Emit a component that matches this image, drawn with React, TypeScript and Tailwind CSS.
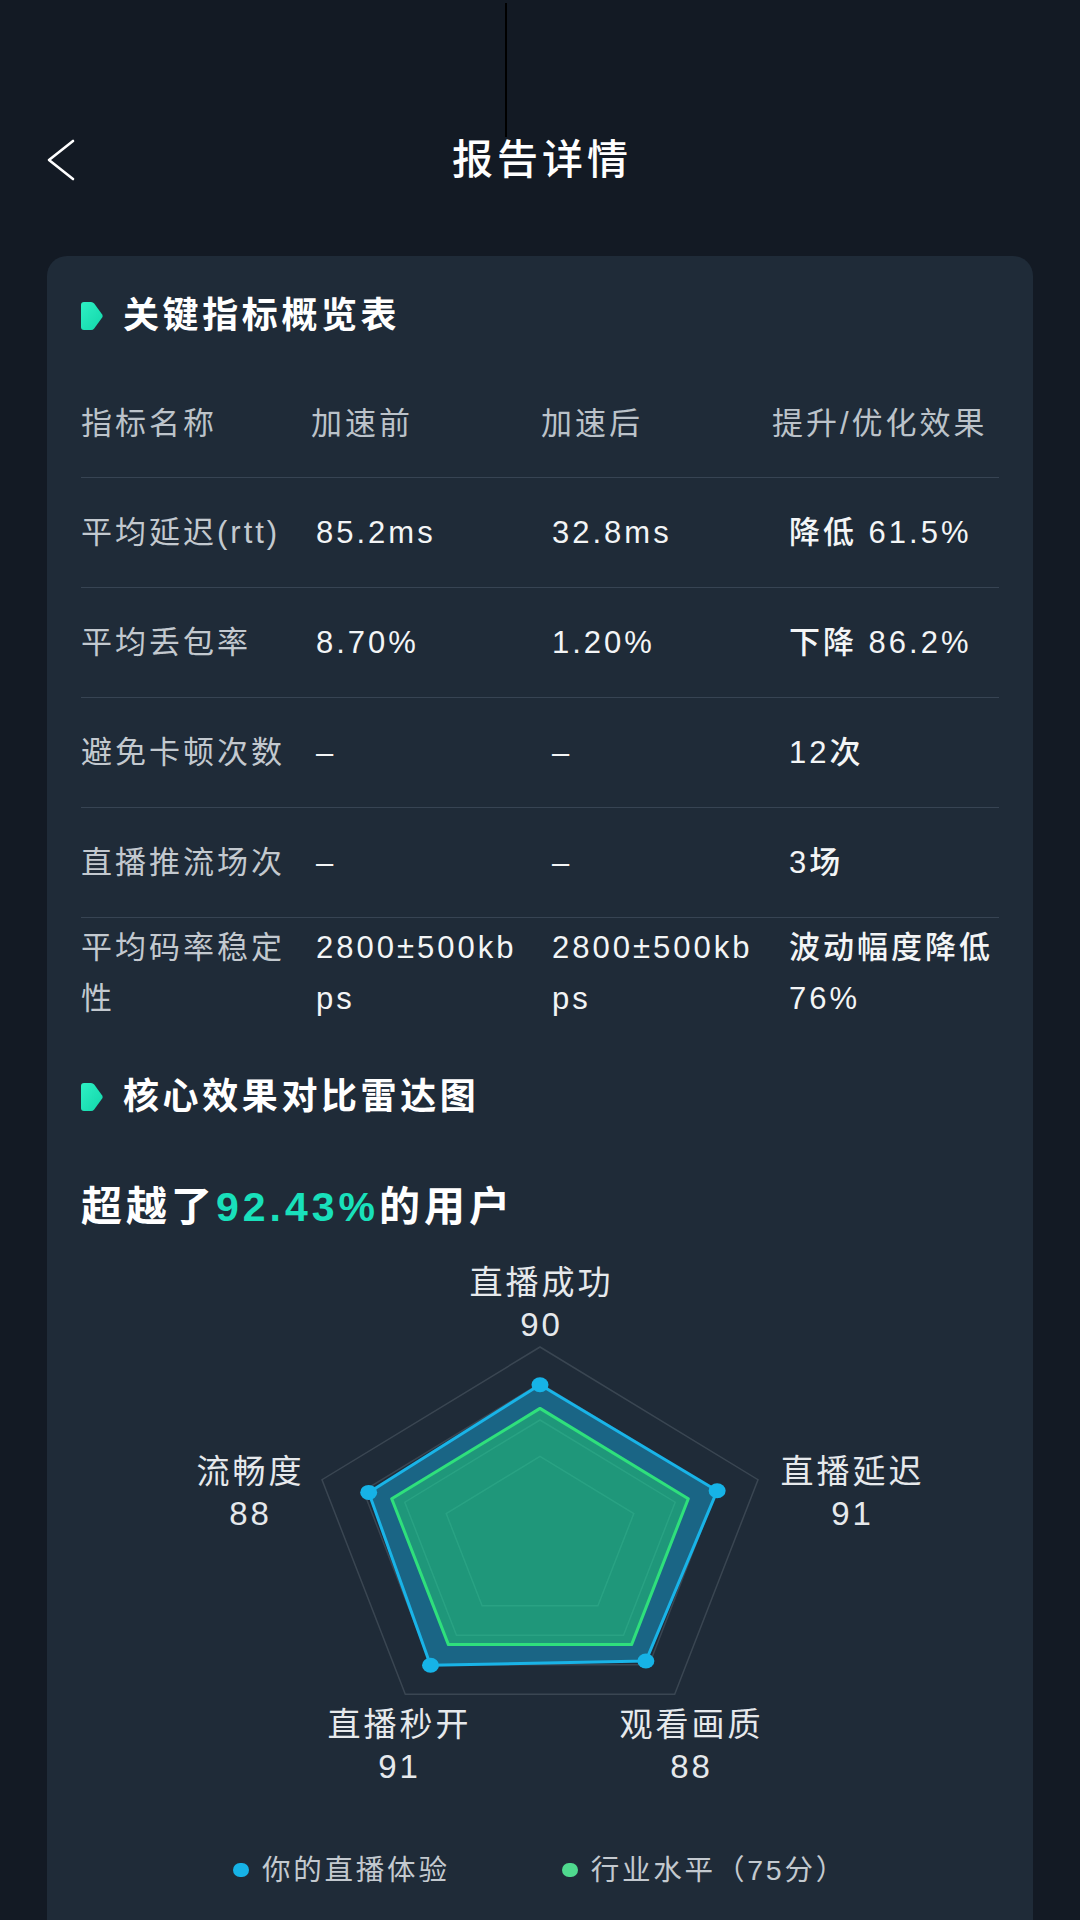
const ROWS = [
  { name: '平均延迟(rtt)', before: '85.2ms', after: '32.8ms', effect: '降低 61.5%' },
  { name: '平均丢包率', before: '8.70%', after: '1.20%', effect: '下降 86.2%' },
  { name: '避免卡顿次数', before: '–', after: '–', effect: '12次' },
  { name: '直播推流场次', before: '–', after: '–', effect: '3场' },
  { name: '平均码率稳定性', before: '2800±500kbps', after: '2800±500kbps', effect: '波动幅度降低76%' },
]

// radar geometry (the reference is drawn slightly wider than tall)
const CX = 459
const CY = 304
const R = 192
const SX = 1.194

const AXES = [
  { label: '直播成功', value: 90, lx: 459, ly: 48 },
  { label: '直播延迟', value: 91, lx: 770, ly: 237 },
  { label: '观看画质', value: 88, lx: 609, ly: 490 },
  { label: '直播秒开', value: 91, lx: 317, ly: 490 },
  { label: '流畅度', value: 88, lx: 168, ly: 237 },
]

function pt(i: number, f: number): [number, number] {
  const a = ((-90 + 72 * i) * Math.PI) / 180
  return [CX + R * f * Math.cos(a) * SX, CY + R * f * Math.sin(a)]
}

function poly(fs: number[]) {
  return fs.map((f, i) => pt(i, f).map((n) => n.toFixed(1)).join(',')).join(' ')
}

function SectionTitle({ text }: { text: string }) {
  return (
    <div className="flex h-[48px] items-center">
      <svg width="22" height="28" viewBox="0 0 22 28" className="mr-[20px] shrink-0">
        <defs>
          <linearGradient id={`g-${text}`} x1="0" y1="0" x2="1" y2="1">
            <stop offset="0" stopColor="#2ef0c4" />
            <stop offset="1" stopColor="#12d6aa" />
          </linearGradient>
        </defs>
        <path
          d="M3 0 H10 Q12 0 13.2 1.6 L21 12.2 Q22.3 14 21 15.8 L13.2 26.4 Q12 28 10 28 H3 Q0 28 0 25 V3 Q0 0 3 0 Z"
          fill={`url(#g-${text})`}
        />
      </svg>
      <span className="text-[36px] font-bold leading-[48px] tracking-[3.6px] text-white">{text}</span>
    </div>
  )
}

function Radar() {
  const rings = [1, 0.81, 0.62, 0.43]
  const blue = AXES.map((a) => a.value / 112)
  const green = AXES.map(() => 0.68)
  return (
    <div className="relative h-[565px] w-[918px]">
      <svg width="918" height="565" viewBox="0 0 918 565" className="absolute left-0 top-0">
        {rings.map((f) => (
          <polygon key={f} points={poly([f, f, f, f, f])} fill="none" stroke="#3a4652" strokeWidth="1.5" />
        ))}
        <polygon points={poly(blue)} fill="#1a6585" stroke="#19b4e8" strokeWidth="3" strokeLinejoin="round" />
        <polygon points={poly(green)} fill="#1f977a" stroke="#2fe07c" strokeWidth="3" strokeLinejoin="round" />
        {[0.62, 0.43].map((f) => (
          <polygon key={f} points={poly([f, f, f, f, f])} fill="none" stroke="#36b08f" strokeOpacity="0.45" strokeWidth="1.5" />
        ))}
        {blue.map((f, i) => {
          const [x, y] = pt(i, f)
          return <ellipse key={i} cx={x} cy={y} rx="8.5" ry="7.5" fill="#16b3e7" />
        })}
      </svg>
      {AXES.map((a) => (
        <div
          key={a.label}
          className="absolute -translate-x-1/2 whitespace-nowrap pl-[3px] text-center text-[33px] leading-[42px] tracking-[3px] text-[#e6e9ec]"
          style={{ left: a.lx, top: a.ly - 21 }}
        >
          <div>{a.label}</div>
          <div>{a.value}</div>
        </div>
      ))}
    </div>
  )
}

export default function App() {
  return (
    <div className="relative h-[1920px] overflow-hidden bg-[#131a24] font-['Liberation_Sans','Noto_Sans_CJK_SC',sans-serif] text-white">
      {/* thin dark line visible at the top of the capture */}
      <div className="absolute left-[505px] top-[3px] h-[134px] w-[2px] bg-black" />

      <header className="relative mt-[120px] flex h-[80px] items-center justify-center">
        <svg width="30" height="42" viewBox="0 0 30 42" className="absolute left-[46px] top-[19px]">
          <path d="M27 2 L3 21 L27 40" fill="none" stroke="#ffffff" strokeWidth="2.6" strokeLinecap="round" strokeLinejoin="round" />
        </svg>
        <h1 className="pl-[4px] text-[41px] font-medium leading-none tracking-[4px]">报告详情</h1>
      </header>

      <div className="mx-[47px] mt-[56px] rounded-[20px] bg-[#1f2b38] px-[34px] pb-[60px] pt-[36px]">
        <SectionTitle text="关键指标概览表" />

        <div className="mt-[32px] grid h-[106px] grid-cols-[230px_230px_231px_1fr] items-center border-b border-[#374453] text-[31px] tracking-[3px] text-[#bcc3ca]">
          <span>指标名称</span>
          <span>加速前</span>
          <span>加速后</span>
          <span className="whitespace-nowrap">提升/优化效果</span>
        </div>

        {ROWS.map((r, i) => (
          <div
            key={r.name}
            className={`grid h-[110px] grid-cols-[235px_236px_237px_1fr] items-center text-[31px] leading-[51px] tracking-[3px] ${
              i < ROWS.length - 1 ? 'border-b border-[#374453]' : ''
            }`}
          >
            <span className="break-all pr-[16px] text-[#c3c9cf]">{r.name}</span>
            <span className="break-all pr-[24px] font-medium text-[#f3f5f6]">{r.before}</span>
            <span className="break-all pr-[24px] font-medium text-[#f3f5f6]">{r.after}</span>
            <span className="break-all font-medium text-[#f3f5f6]">{r.effect}</span>
          </div>
        ))}

        <div className="mt-[45px]">
          <SectionTitle text="核心效果对比雷达图" />
        </div>

        <p className="mt-[58px] text-[41px] font-bold leading-[56px] tracking-[4px]">
          超越了<span className="text-[#19e0bb]">92.43%</span>的用户
        </p>

        <Radar />

        <div className="mt-[50px] flex items-center justify-center gap-[112px] text-[28.5px] leading-[40px] tracking-[2.8px] text-[#c3c9cf]">
          <div className="flex items-center gap-[13px]">
            <span className="h-[14px] w-[16px] rounded-full bg-[#16b3e7]" />
            <span>你的直播体验</span>
          </div>
          <div className="flex items-center gap-[13px]">
            <span className="h-[14px] w-[16px] rounded-full bg-[#4fd98e]" />
            <span>行业水平（75分）</span>
          </div>
        </div>
      </div>
    </div>
  )
}
